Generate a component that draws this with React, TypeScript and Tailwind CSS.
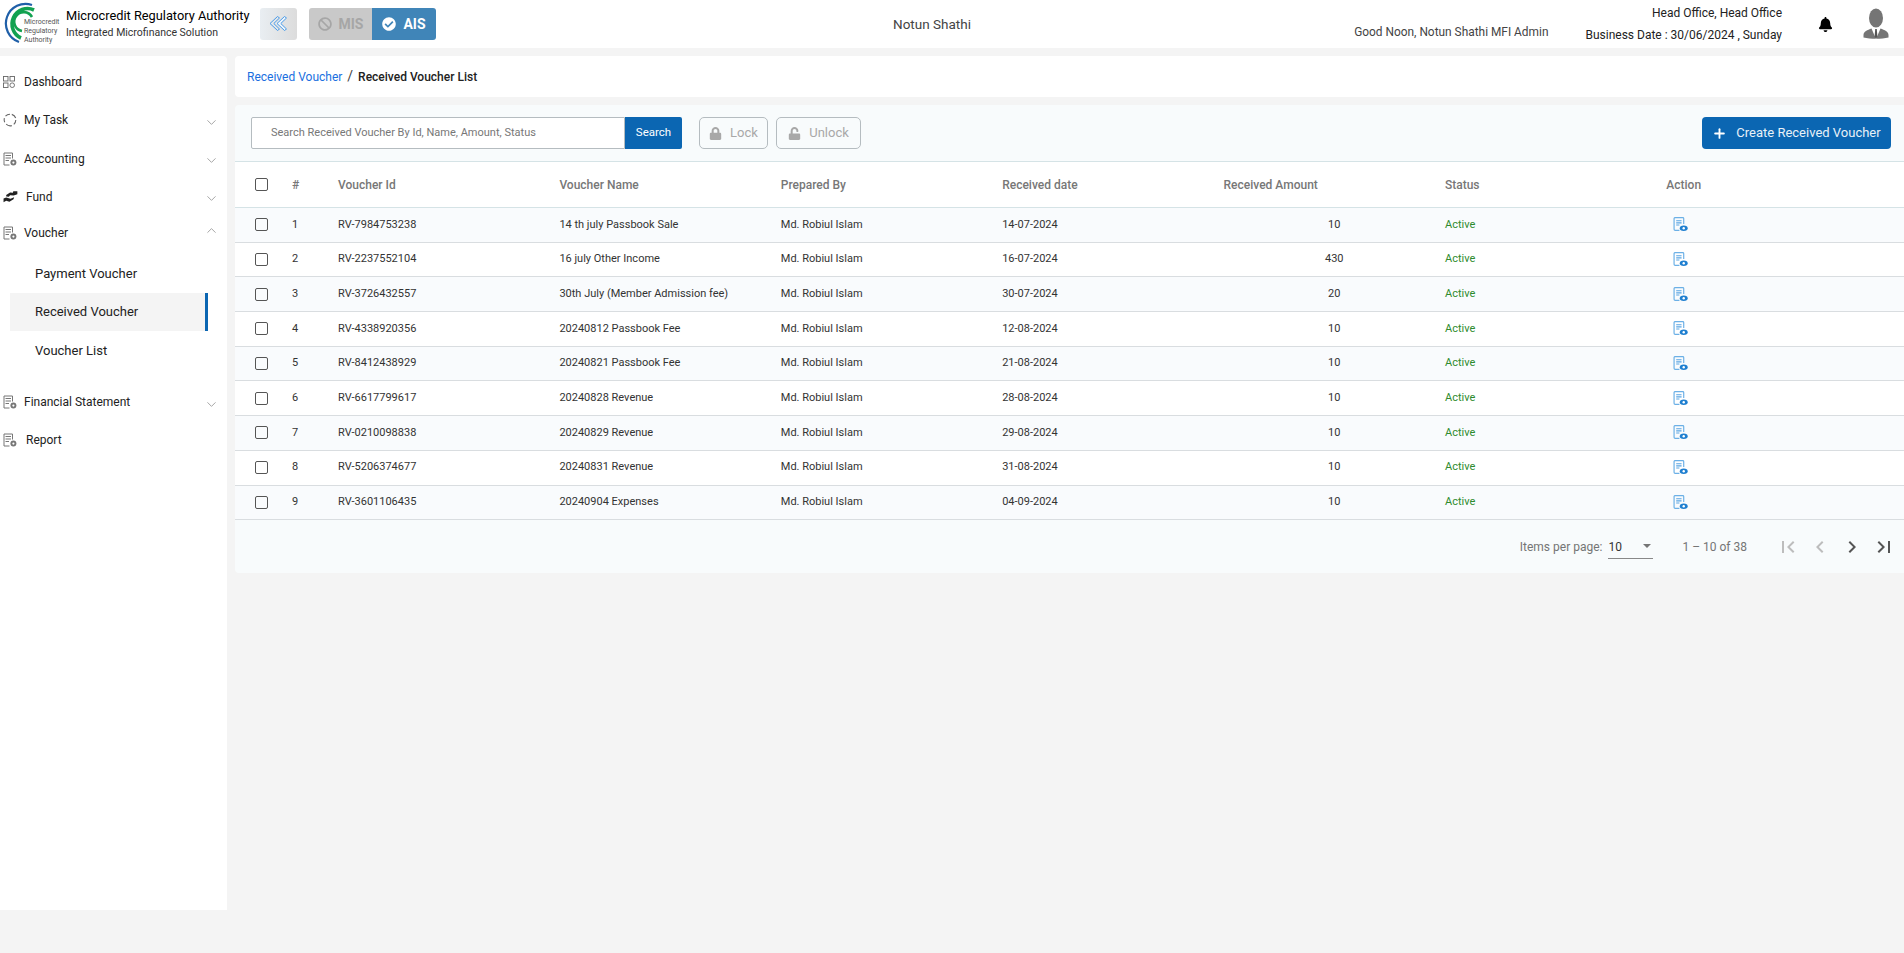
import { ChevronDown, ChevronUp, Plus } from 'lucide-react'
import { FaBan, FaBell, FaCheckCircle, FaLock, FaUnlock } from 'react-icons/fa'
import { MdChevronLeft, MdChevronRight, MdFirstPage, MdLastPage } from 'react-icons/md'

const rows = [
  ['RV-7984753238', '14 th july Passbook Sale', '14-07-2024', '10'],
  ['RV-2237552104', '16 july Other Income', '16-07-2024', '430'],
  ['RV-3726432557', '30th July (Member Admission fee)', '30-07-2024', '20'],
  ['RV-4338920356', '20240812 Passbook Fee', '12-08-2024', '10'],
  ['RV-8412438929', '20240821 Passbook Fee', '21-08-2024', '10'],
  ['RV-6617799617', '20240828 Revenue', '28-08-2024', '10'],
  ['RV-0210098838', '20240829 Revenue', '29-08-2024', '10'],
  ['RV-5206374677', '20240831 Revenue', '31-08-2024', '10'],
  ['RV-3601106435', '20240904 Expenses', '04-09-2024', '10'],
]

function Logo() {
  return (
    <svg viewBox="0 0 60 44" className="h-[44px] w-[60px] shrink-0">
      <path d="M17 40 A19.5 19.5 0 1 1 30 3" fill="none" stroke="#1f5fa8" strokeWidth="2.2" />
      <path d="M19 36 A15 15 0 1 1 32 8" fill="none" stroke="#12a150" strokeWidth="3.6" />
      <path d="M20 29 A9.5 9.5 0 1 1 30 15" fill="none" stroke="#12a150" strokeWidth="2.6" />
      <text x="22" y="22" fontSize="7" fill="#555" fontFamily="Roboto, sans-serif">Microcredit</text>
      <text x="22" y="31" fontSize="7" fill="#555" fontFamily="Roboto, sans-serif">Regulatory</text>
      <text x="22" y="40" fontSize="7" fill="#555" fontFamily="Roboto, sans-serif">Authority</text>
    </svg>
  )
}

function DocIcon() {
  return (
    <svg viewBox="0 0 14 14" className="h-[14px] w-[14px] text-[#777]" fill="none" stroke="currentColor" strokeWidth="1">
      <path d="M9.5 6.5V1H1V13H6.5" />
      <path d="M2.5 3.5H8M2.5 6H8M2.5 8.5H6" />
      <circle cx="10.4" cy="10.6" r="3" fill="currentColor" stroke="none" />
      <circle cx="10.4" cy="10.6" r="1.1" fill="#fff" stroke="none" />
    </svg>
  )
}

function ActionIcon() {
  return (
    <svg viewBox="0 0 14 14" className="h-[15px] w-[15px]" fill="none">
      <path d="M10 6.5V1.5a1 1 0 0 0-1-1H2a1 1 0 0 0-1 1v10a1 1 0 0 0 1 1h4" stroke="#6cb0e6" strokeWidth="1.1" />
      <path d="M3 3.5H8M3 5.5H8M3 7.5H6" stroke="#5aa5e2" strokeWidth="1" />
      <ellipse cx="10" cy="10.5" rx="3.7" ry="2.5" fill="#1f7fd0" />
      <circle cx="10" cy="10.5" r="1.1" fill="#fff" />
    </svg>
  )
}

function GridIcon() {
  return (
    <svg viewBox="0 0 12 12" className="h-[12px] w-[12px]" fill="none" stroke="#666" strokeWidth="0.9">
      <rect x="0.5" y="0.5" width="4.5" height="4.5" />
      <rect x="7" y="0.5" width="4.5" height="4.5" />
      <rect x="0.5" y="7" width="4.5" height="4.5" />
      <circle cx="9.2" cy="9.2" r="2.3" />
    </svg>
  )
}

function TaskIcon() {
  return (
    <svg viewBox="0 0 14 14" className="h-[14px] w-[14px]" fill="none" stroke="#666" strokeWidth="1.1">
      <path d="M2.5 3.2A5.8 5.8 0 0 1 7 1.2M8.8 1.4a5.8 5.8 0 0 1 3.9 3.6M12.8 7a5.8 5.8 0 0 1-2 4.3M8.8 12.6a5.8 5.8 0 0 1-5.6-1.4M1.7 9.2A5.8 5.8 0 0 1 1.4 5.2" />
    </svg>
  )
}

function HandIcon() {
  return (
    <svg viewBox="0 0 14 12" className="h-[13px] w-[15px]" fill="#222">
      <path d="M3 4.6 6.6 2.2 9.2 2.6 9.6 1.2H13.4V3.8L10 5 6.6 4.8 5.5 6.2 3 5.9Z" />
      <path d="M0.5 7.8 3 6.9 7 8 10.4 6.8 9.8 8.6 6 10.8 3 10 0.5 11.4Z" />
    </svg>
  )
}

function DoubleChevron() {
  return (
    <svg viewBox="0 0 24 20" className="h-[20px] w-[24px]" fill="none" stroke="#4a9be8" strokeWidth="1" strokeLinejoin="round">
      <path d="M10.5 2.5 3 9.5 10.5 16.5 12.5 15 6.8 9.5 12.5 4Z" />
      <path d="M17.5 2.5 10 9.5 17.5 16.5 19.5 15 13.8 9.5 19.5 4Z" fill="#eef5fb" />
    </svg>
  )
}

function Avatar() {
  return (
    <svg viewBox="0 0 26 32" className="h-[32px] w-[26px]">
      <ellipse cx="13" cy="10" rx="7" ry="9.6" fill="#757575" />
      <path d="M0.5 27c0-3.5 4-4.8 8-6.4L13 31l4.5-10.4c4 1.6 8 2.9 8 6.4v2.5c-7 1.8-18 1.8-25 0Z" fill="#757575" />
      <path d="M12.2 21h1.6l.6 8-1.4 1.6-1.4-1.6Z" fill="#555" />
    </svg>
  )
}

function NavItem({ icon, label, heightClass, chevron, labelClass = '' }: { icon: React.ReactNode; label: string; heightClass: string; chevron?: 'up' | 'down'; labelClass?: string }) {
  return (
    <div className={`flex items-center text-[12px] text-[#222] ${heightClass}`}>
      <div className="flex w-[24px] shrink-0 justify-start pl-[3px]">{icon}</div>
      <span className={labelClass}>{label}</span>
      {chevron === 'down' && <ChevronDown className="mt-[4px] ml-auto mr-[8px] h-[15px] w-[15px] text-[#888]" strokeWidth={1.2} />}
      {chevron === 'up' && <ChevronUp className="mb-[4px] ml-auto mr-[8px] h-[15px] w-[15px] text-[#888]" strokeWidth={1.2} />}
    </div>
  )
}

export default function App() {
  return (
    <div className="flex h-[953px] flex-col overflow-hidden bg-[#f4f4f4] font-[family-name:Roboto,sans-serif]">
      <header className="flex h-[48px] shrink-0 items-center bg-white">
        <div className="pl-[2px]">
          <Logo />
        </div>
        <div className="ml-[4px] w-[194px] shrink-0 whitespace-nowrap">
          <div className="text-[12.8px] leading-[16px] text-black">Microcredit Regulatory Authority</div>
          <div className="mt-[2px] text-[10.5px] leading-[14px] text-[#333]">Integrated Microfinance Solution</div>
        </div>
        <div className="flex h-[32px] w-[37px] shrink-0 items-center justify-center rounded-[3px] bg-gradient-to-r from-[#e9eef2] to-[#dcdcdc]">
          <DoubleChevron />
        </div>
        <div className="ml-[12px] flex h-[32px] shrink-0 overflow-hidden rounded-[3px] text-[14px] font-bold">
          <div className="flex w-[63px] items-center justify-center gap-[7px] bg-[#c9c9c9] text-[#a6a6a6]">
            <FaBan className="h-[14px] w-[14px]" />
            MIS
          </div>
          <div className="flex w-[64px] items-center justify-center gap-[7px] bg-[#4085b8] text-white">
            <FaCheckCircle className="h-[14px] w-[14px]" />
            AIS
          </div>
        </div>
        <div className="ml-[457px] w-[100px] shrink-0 text-[13.5px] text-[#444]">Notun Shathi</div>
        <div className="ml-auto self-end whitespace-nowrap pb-[9px] text-[11.9px] leading-[14px] text-[#444]">Good Noon, Notun Shathi MFI Admin</div>
        <div className="ml-[37px] whitespace-nowrap text-right text-[12px] leading-[22px] text-[#222]">
          <div>Head Office, Head Office</div>
          <div>Business Date : 30/06/2024 , Sunday</div>
        </div>
        <FaBell className="ml-[36px] h-[15px] w-[15px] text-black" />
        <div className="ml-[30px] mr-[15px]">
          <Avatar />
        </div>
      </header>

      <div className="mt-[8px] flex flex-1 items-start gap-[8px]">
        <aside className="h-[854px] w-[227px] shrink-0 rounded-tr-[4px] bg-white pt-[6px]">
          <NavItem icon={<GridIcon />} label="Dashboard" heightClass="h-[39px]" />
          <NavItem icon={<TaskIcon />} label="My Task" heightClass="h-[38px]" chevron="down" />
          <NavItem icon={<DocIcon />} label="Accounting" heightClass="h-[39px]" chevron="down" />
          <NavItem icon={<HandIcon />} label="Fund" heightClass="h-[37px]" chevron="down" labelClass="pl-[2px]" />
          <NavItem icon={<DocIcon />} label="Voucher" heightClass="h-[35px]" chevron="up" />
          <div className="mt-[5px] text-[13px] text-[#222]">
            <div className="flex h-[38px] items-center pl-[35px]">Payment Voucher</div>
            <div className="ml-[10px] flex h-[38px] w-[198px] items-center border-r-[3px] border-[#0b66b2] bg-[#f4f4f4] pl-[25px]">Received Voucher</div>
            <div className="flex h-[39px] items-center pl-[35px]">Voucher List</div>
          </div>
          <div className="mt-[13px]">
            <NavItem icon={<DocIcon />} label="Financial Statement" heightClass="h-[38px]" chevron="down" />
            <NavItem icon={<DocIcon />} label="Report" heightClass="h-[38px]" labelClass="pl-[2px]" />
          </div>
        </aside>

        <main className="min-w-0 flex-1">
          <div className="flex h-[41px] items-center rounded-l-[4px] bg-white pl-[12px] text-[12px]">
            <span className="text-[#1a6fe0]">Received Voucher</span>
            <span className="mx-[5px] text-[14px] text-[#444]">/</span>
            <span className="font-medium text-[#222]">Received Voucher List</span>
          </div>

          <section className="mt-[8px] h-[468px] rounded-l-[4px] bg-[#f8fbfc]">
            <div className="flex h-[56px] items-start pl-[16px] pr-[13px] pt-[12px]">
              <div className="flex h-[32px] w-[431px]">
                <div className="flex flex-1 items-center rounded-l-[2px] border border-[#b5bcc0] bg-white pl-[19px] text-[11px] text-[#777]">
                  Search Received Voucher By Id, Name, Amount, Status
                </div>
                <div className="flex w-[57px] items-center justify-center rounded-r-[2px] bg-[#0b66b2] text-[11.5px] text-white">Search</div>
              </div>
              <div className="ml-[17px] flex h-[32px] w-[69px] items-center justify-center gap-[8px] rounded-[5px] border border-[#b5bcc0] text-[13px] text-[#a8a8a8]">
                <FaLock className="h-[13px] w-[13px]" />
                Lock
              </div>
              <div className="ml-[8px] flex h-[32px] w-[85px] items-center justify-center gap-[8px] rounded-[5px] border border-[#b5bcc0] text-[13px] text-[#a8a8a8]">
                <FaUnlock className="h-[13px] w-[13px]" />
                Unlock
              </div>
              <div className="ml-auto flex h-[32px] w-[189px] items-center justify-center gap-[9px] rounded-[4px] bg-[#0b66b2] text-[13px] text-[#e8f1f8]">
                <Plus className="h-[15px] w-[15px] text-white" strokeWidth={3} />
                Create Received Voucher
              </div>
            </div>

            <table className="w-full table-fixed border-collapse text-[11px] text-[#333]">
              <colgroup>
                <col className="w-[57px]" />
                <col className="w-[46px]" />
                <col className="w-[221.4px]" />
                <col className="w-[221.4px]" />
                <col className="w-[221.4px]" />
                <col className="w-[221.4px]" />
                <col className="w-[221.4px]" />
                <col className="w-[221.4px]" />
                <col />
              </colgroup>
              <thead>
                <tr className="h-[46px] border-y border-[#d5e3e6] bg-white text-left text-[12px] text-[#777]">
                  <th className="pl-[20px] font-medium">
                    <span className="block h-[13px] w-[13px] rounded-[2px] border border-[#555]" />
                  </th>
                  <th className="font-medium">#</th>
                  <th className="font-medium">Voucher Id</th>
                  <th className="font-medium">Voucher Name</th>
                  <th className="font-medium">Prepared By</th>
                  <th className="font-medium">Received date</th>
                  <th className="font-medium">Received Amount</th>
                  <th className="font-medium">Status</th>
                  <th className="font-medium">Action</th>
                </tr>
              </thead>
              <tbody>
                {rows.map((row, i) => (
                  <tr key={row[0]} className={`h-[34.7px] border-b border-[#d9dde0] ${i % 2 === 0 ? 'bg-[#f9fbfd]' : 'bg-white'}`}>
                    <td className="pl-[20px]">
                      <span className="block h-[13px] w-[13px] rounded-[2px] border border-[#555]" />
                    </td>
                    <td>{i + 1}</td>
                    <td>{row[0]}</td>
                    <td>{row[1]}</td>
                    <td>Md. Robiul Islam</td>
                    <td>{row[2]}</td>
                    <td className="text-center">{row[3]}</td>
                    <td className="text-[#2e8b2e]">Active</td>
                    <td className="pl-[7px]">
                      <ActionIcon />
                    </td>
                  </tr>
                ))}
              </tbody>
            </table>

            <div className="flex h-[53px] items-center justify-end pr-[8px] text-[12px] text-[#757575]">
              <span>Items per page:</span>
              <div className="ml-[6px] flex h-[24px] w-[45px] items-start justify-between border-b border-[#888] pt-[3px] text-[#333]">
                <span>10</span>
                <span className="mr-[2px] mt-[6px] h-0 w-0 border-x-[4px] border-t-[4px] border-x-transparent border-t-[#757575]" />
              </div>
              <span className="ml-[29px]">1 – 10 of 38</span>
              <div className="ml-[29px] flex gap-[8px]">
                <MdFirstPage className="h-[24px] w-[24px] text-[#bdbdbd]" />
                <MdChevronLeft className="h-[24px] w-[24px] text-[#bdbdbd]" />
                <MdChevronRight className="h-[24px] w-[24px] text-[#555]" />
                <MdLastPage className="h-[24px] w-[24px] text-[#555]" />
              </div>
            </div>
          </section>
        </main>
      </div>
    </div>
  )
}
